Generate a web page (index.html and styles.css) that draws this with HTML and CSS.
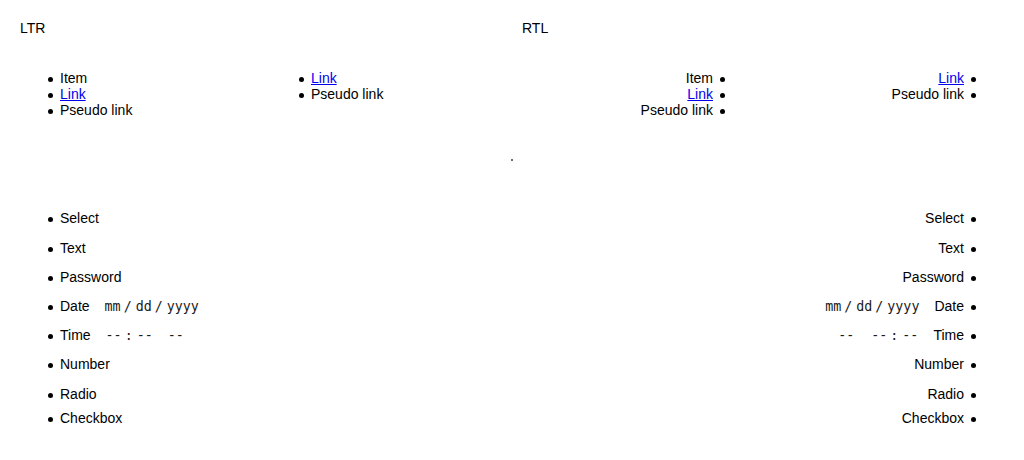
FILE: index.html
```html
<!DOCTYPE html>
<html lang="en">
<head>
<meta charset="utf-8">
<title>LTR / RTL</title>
<link rel="stylesheet" href="styles.css">
</head>
<body>
<div class="page">
  <div class="heads">
    <div class="head head-ltr">LTR</div>
    <div class="head">RTL</div>
  </div>

  <div class="row">
    <div class="group">
      <ul class="list list-first">
        <li>Item</li>
        <li><a href="#">Link</a></li>
        <li><span class="pseudo">Pseudo link</span></li>
      </ul>
      <ul class="list">
        <li><a href="#">Link</a></li>
        <li><span class="pseudo">Pseudo link</span></li>
      </ul>
    </div>
    <div class="group" dir="rtl">
      <ul class="list list-first">
        <li><a href="#">Link</a></li>
        <li><span class="pseudo">Pseudo link</span></li>
      </ul>
      <ul class="list">
        <li>Item</li>
        <li><a href="#">Link</a></li>
        <li><span class="pseudo">Pseudo link</span></li>
      </ul>
    </div>
  </div>

  <div class="dot-row"><span class="dot"></span></div>

  <div class="row form-row">
    <ul class="list form-list">
      <li class="f-select">Select</li>
      <li class="f-text">Text</li>
      <li class="f-password">Password</li>
      <li class="f-date">Date<span class="field field-ltr" dir="ltr"><span>mm</span><span class="sep">/</span><span>dd</span><span class="sep">/</span><span>yyyy</span></span></li>
      <li class="f-time">Time<span class="field field-ltr" dir="ltr"><span>--</span><span class="colon">:</span><span>--</span><span class="ampm">--</span></span></li>
      <li class="f-number">Number</li>
      <li class="f-radio">Radio</li>
      <li class="f-checkbox">Checkbox</li>
    </ul>
    <ul class="list form-list" dir="rtl">
      <li class="f-select">Select</li>
      <li class="f-text">Text</li>
      <li class="f-password">Password</li>
      <li class="f-date">Date<span class="field field-rtl" dir="ltr"><span>mm</span><span class="sep">/</span><span>dd</span><span class="sep">/</span><span>yyyy</span></span></li>
      <li class="f-time">Time<span class="field field-rtl" dir="ltr"><span class="ampm-r">--</span><span>--</span><span class="colon">:</span><span>--</span></span></li>
      <li class="f-number">Number</li>
      <li class="f-radio">Radio</li>
      <li class="f-checkbox">Checkbox</li>
    </ul>
  </div>
</div>
</body>
</html>
```

FILE: styles.css
```css
html, body {
  margin: 0;
  padding: 0;
  background: #fff;
}

body {
  font-family: "Liberation Sans", Arial, sans-serif;
  font-size: 14px;
  line-height: 16px;
  color: #000;
}

.page {
  padding: 20px 20px 0 20px;
}

.heads {
  display: flex;
}

.head-ltr {
  width: 502px;
}

.row {
  display: flex;
  justify-content: space-between;
  margin-top: 34px;
}

.group {
  display: flex;
}

.list {
  margin: 0;
  padding: 0;
  padding-inline-start: 40px;
  list-style: none;
}

.list li::before {
  content: "";
  display: inline-block;
  width: 5px;
  height: 5px;
  border-radius: 50%;
  background: #000;
  margin-inline-start: -12px;
  margin-inline-end: 7px;
  vertical-align: 1.5px;
}

.list-first {
  width: 251px;
  box-sizing: border-box;
}

.list a {
  color: #0000ee;
  text-decoration: underline;
}

.dot-row {
  margin-top: 41px;
  height: 2px;
  display: flex;
  justify-content: center;
}

.dot {
  width: 2px;
  height: 2px;
  margin-right: 1px;
  background: #6b6b6b;
}

.form-row {
  margin-top: 49px;
}

.form-list li {
  height: 16px;
  padding-bottom: 13px;
}

.form-list li.f-select,
.form-list li.f-number {
  padding-bottom: 14px;
}

.form-list li.f-radio {
  padding-bottom: 8px;
}

.form-list li.f-checkbox {
  padding-bottom: 0;
}

.field {
  display: inline-flex;
  font-family: "DejaVu Sans Mono", "Liberation Mono", monospace;
  font-size: 13.333px;
  line-height: 12px;
  color: #1a1a1a;
  vertical-align: baseline;
}

.field-ltr {
  margin-left: 15px;
}

.field-rtl {
  margin-right: 15px;
}

.sep {
  margin: 0 4px 0 3px;
}

.colon {
  margin: 0 4px 0 3px;
}

.ampm {
  margin-left: 15px;
}

.ampm-r {
  margin-right: 17px;
}
```
